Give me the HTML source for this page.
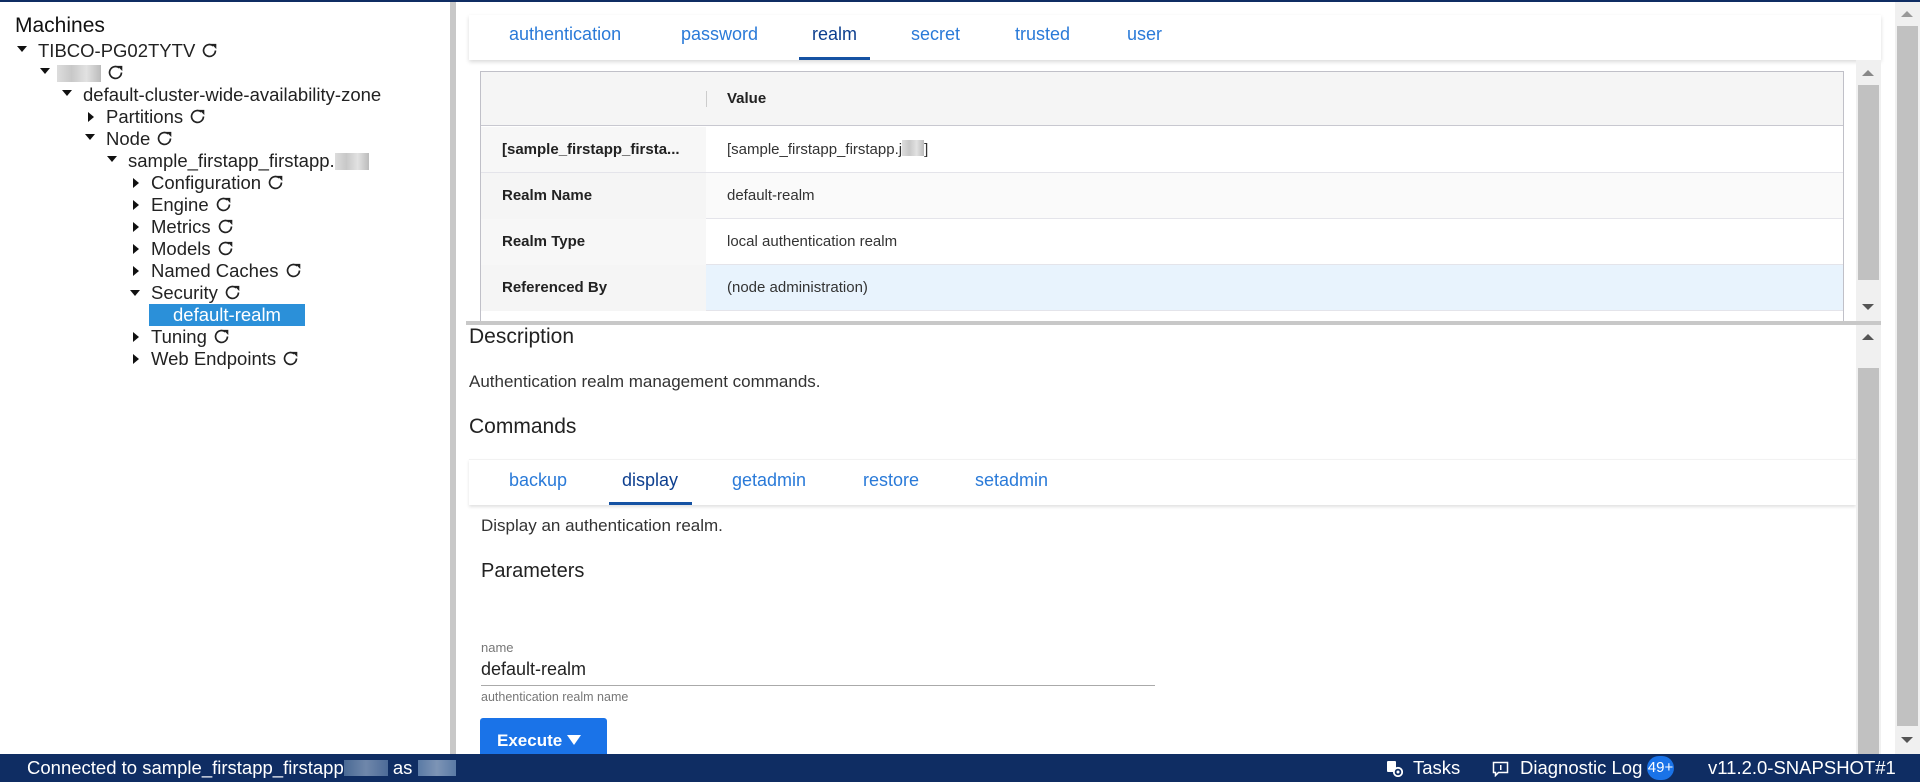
<!DOCTYPE html>
<html><head><meta charset="utf-8"><style>
*{box-sizing:border-box;margin:0;padding:0}
body{width:1920px;height:782px;overflow:hidden;background:#fff;font-family:"Liberation Sans",sans-serif;position:relative;color:#222}
.abs{position:absolute}
.topline{left:0;top:0;width:1920px;height:2px;background:#0f2d63}
.tree div{position:absolute;font-size:18.5px;line-height:22px;white-space:nowrap;color:#222}
.tri{position:absolute;width:0;height:0}
.down{border-left:5px solid transparent;border-right:5px solid transparent;border-top:6px solid #111}
.right{border-top:5px solid transparent;border-bottom:5px solid transparent;border-left:6px solid #111}
.rf{display:inline-block;vertical-align:-2px;margin-left:6px}
.blur{display:inline-block;background:linear-gradient(90deg,#ddd,#c8c8c8,#e2e2e2,#bbb);vertical-align:-3px}
.tabs{position:absolute;background:#fff}
.tabs span{position:absolute;color:#2a7ad8;font-size:18px}
.tabs span.act{color:#0d3f8f}
.cell{position:absolute;font-size:15px;line-height:46px;white-space:nowrap}
.lbl{font-weight:bold;color:#222}
.sb{position:absolute;background:#f0f0f0}
.thumb{position:absolute;background:#c1c1c1}
.up,.dn{position:absolute;width:0;height:0;border-left:6px solid transparent;border-right:6px solid transparent}
.up{border-bottom:6px solid #888}.dn{border-top:6px solid #555}
.status{left:0;top:754px;width:1920px;height:28px;background:#0f2d63;color:#fff;font-size:18.5px;line-height:28px}
</style></head><body>
<svg width="0" height="0" style="position:absolute"><defs><symbol id="rf" viewBox="0 0 16 16"><path d="M13.6 8A5.6 5.6 0 1 1 11.5 3.6" fill="none" stroke="#222" stroke-width="1.6"/><path d="M9.6 1.8h4.8v4.8z" fill="#222"/></symbol></defs></svg>
<div class="abs topline"></div>
<div class="abs" style="left:450px;top:2px;width:6px;height:752px;background:#c8c8c8"></div>
<div class="abs" style="left:15px;top:14px;font-size:21px;color:#111">Machines</div>
<div class="tree">
<div style="left:17px;top:46px" class="tri down"></div><div style="left:38px;top:40px">TIBCO-PG02TYTV<svg class="rf" width="17" height="17"><use href="#rf"/></svg></div>
<div style="left:40px;top:68px" class="tri down"></div><div style="left:57px;top:62px"><span class="blur" style="width:44px;height:17px"></span><svg class="rf" width="17" height="17"><use href="#rf"/></svg></div>
<div style="left:62px;top:90px" class="tri down"></div><div style="left:83px;top:84px">default-cluster-wide-availability-zone</div>
<div style="left:88px;top:112px" class="tri right"></div><div style="left:106px;top:106px">Partitions<svg class="rf" width="17" height="17"><use href="#rf"/></svg></div>
<div style="left:85px;top:134px" class="tri down"></div><div style="left:106px;top:128px">Node<svg class="rf" width="17" height="17"><use href="#rf"/></svg></div>
<div style="left:107px;top:156px" class="tri down"></div><div style="left:128px;top:150px">sample_firstapp_firstapp.<span class="blur" style="width:34px;height:17px"></span></div>
<div style="left:133px;top:178px" class="tri right"></div><div style="left:151px;top:172px">Configuration<svg class="rf" width="17" height="17"><use href="#rf"/></svg></div>
<div style="left:133px;top:200px" class="tri right"></div><div style="left:151px;top:194px">Engine<svg class="rf" width="17" height="17"><use href="#rf"/></svg></div>
<div style="left:133px;top:222px" class="tri right"></div><div style="left:151px;top:216px">Metrics<svg class="rf" width="17" height="17"><use href="#rf"/></svg></div>
<div style="left:133px;top:244px" class="tri right"></div><div style="left:151px;top:238px">Models<svg class="rf" width="17" height="17"><use href="#rf"/></svg></div>
<div style="left:133px;top:266px" class="tri right"></div><div style="left:151px;top:260px">Named Caches<svg class="rf" width="17" height="17"><use href="#rf"/></svg></div>
<div style="left:130px;top:290px" class="tri down"></div><div style="left:151px;top:282px">Security<svg class="rf" width="17" height="17"><use href="#rf"/></svg></div>
<div style="left:149px;top:304px;width:156px;height:22px;background:#2b90d9"></div><div style="left:173px;top:304px;color:#fff">default-realm</div>
<div style="left:133px;top:332px" class="tri right"></div><div style="left:151px;top:326px">Tuning<svg class="rf" width="17" height="17"><use href="#rf"/></svg></div>
<div style="left:133px;top:354px" class="tri right"></div><div style="left:151px;top:348px">Web Endpoints<svg class="rf" width="17" height="17"><use href="#rf"/></svg></div>
</div>

<div class="tabs" style="left:469px;top:15px;width:1412px;height:45px;box-shadow:0 2px 4px rgba(0,0,0,.15)">
<span style="left:40px;top:9px">authentication</span>
<span style="left:212px;top:9px">password</span>
<span class="act" style="left:343px;top:9px">realm</span>
<span style="left:442px;top:9px">secret</span>
<span style="left:546px;top:9px">trusted</span>
<span style="left:658px;top:9px">user</span>
<div class="abs" style="left:330px;top:42px;width:71px;height:3px;background:#1552a3"></div>
</div>

<div class="abs" style="left:480px;top:71px;width:1364px;height:254px;border:1px solid #c0c0c8;border-bottom:none;background:#fff;overflow:hidden">
<div class="abs" style="left:0;top:0;width:1364px;height:54px;background:#f5f5f5;border-bottom:1px solid #c8c8d0"></div>
<div class="abs" style="left:225px;top:19px;width:1px;height:16px;background:#ccc"></div>
<div class="cell lbl" style="left:246px;top:4px">Value</div>
<div class="abs" style="left:0;top:55px;width:225px;height:46px;background:#f7f7f7;border-bottom:1px solid #e4e4ea"></div>
<div class="abs" style="left:225px;top:55px;width:1140px;height:46px;background:#fff;border-bottom:1px solid #e4e4ea"></div>
<div class="cell lbl" style="left:21px;top:55px">[sample_firstapp_firsta...</div>
<div class="cell" style="left:246px;top:55px;color:#333">[sample_firstapp_firstapp.j<span class="blur" style="width:22px;height:16px;vertical-align:-2px"></span>]</div>
<div class="abs" style="left:0;top:101px;width:1364px;height:46px;background:#fafafa;border-bottom:1px solid #e4e4ea"></div>
<div class="abs" style="left:0;top:101px;width:225px;height:46px;background:#f5f5f5"></div>
<div class="cell lbl" style="left:21px;top:101px">Realm Name</div>
<div class="cell" style="left:246px;top:101px;color:#333">default-realm</div>
<div class="abs" style="left:0;top:147px;width:1364px;height:46px;background:#fff;border-bottom:1px solid #e4e4ea"></div>
<div class="abs" style="left:0;top:147px;width:225px;height:46px;background:#f7f7f7"></div>
<div class="cell lbl" style="left:21px;top:147px">Realm Type</div>
<div class="cell" style="left:246px;top:147px;color:#333">local authentication realm</div>
<div class="abs" style="left:0;top:193px;width:1364px;height:46px;background:#e8f3fd;border-bottom:1px solid #e4e4ea"></div>
<div class="abs" style="left:0;top:193px;width:225px;height:46px;background:#f5f5f5"></div>
<div class="cell lbl" style="left:21px;top:193px">Referenced By</div>
<div class="cell" style="left:246px;top:193px;color:#333">(node administration)</div>
</div>
<div class="sb" style="left:1856px;top:60px;width:25px;height:261px"></div>
<div class="thumb" style="left:1858px;top:85px;width:21px;height:195px"></div>
<div class="up" style="left:1862px;top:70px"></div>
<div class="dn" style="left:1862px;top:304px"></div>
<div class="abs" style="left:466px;top:321px;width:1415px;height:4px;background:#c8c8c8"></div>

<div class="abs" style="left:469px;top:325px;font-size:21px;color:#222">Description</div>
<div class="abs" style="left:469px;top:372px;font-size:17px;color:#333">Authentication realm management commands.</div>
<div class="abs" style="left:469px;top:415px;font-size:21px;color:#222">Commands</div>
<div class="tabs" style="left:469px;top:459px;width:1387px;height:46px;box-shadow:0 2px 3px rgba(0,0,0,.12);border-top:1px solid #f2f2f2">
<span style="left:40px;top:10px">backup</span>
<span class="act" style="left:153px;top:10px">display</span>
<span style="left:263px;top:10px">getadmin</span>
<span style="left:394px;top:10px">restore</span>
<span style="left:506px;top:10px">setadmin</span>
<div class="abs" style="left:140px;top:42px;width:83px;height:3px;background:#1552a3"></div>
</div>
<div class="abs" style="left:481px;top:516px;font-size:17px;color:#333">Display an authentication realm.</div>
<div class="abs" style="left:481px;top:560px;font-size:20px;color:#222">Parameters</div>
<div class="abs" style="left:481px;top:640px;font-size:13px;color:#777">name</div>
<div class="abs" style="left:481px;top:659px;font-size:18px;color:#222">default-realm</div>
<div class="abs" style="left:481px;top:685px;width:674px;height:1px;background:#aaa"></div>
<div class="abs" style="left:481px;top:690px;font-size:12.5px;color:#777">authentication realm name</div>
<div class="abs" style="left:480px;top:718px;width:127px;height:40px;background:#1a73e8;border-radius:3px;color:#fff;font-weight:bold;font-size:17px;padding:13px 0 0 17px">Execute <span style="display:inline-block;width:0;height:0;border-left:7px solid transparent;border-right:7px solid transparent;border-top:10px solid #fff;vertical-align:1px"></span></div>
<div class="sb" style="left:1856px;top:325px;width:25px;height:429px"></div>
<div class="thumb" style="left:1858px;top:368px;width:21px;height:386px"></div>
<div class="up" style="left:1862px;top:334px;border-bottom-color:#555"></div>

<div class="sb" style="left:1895px;top:2px;width:25px;height:752px"></div>
<div class="thumb" style="left:1897px;top:26px;width:21px;height:700px"></div>
<div class="up" style="left:1901px;top:11px;border-bottom-color:#999"></div>
<div class="dn" style="left:1901px;top:737px;border-top-color:#555"></div>

<div class="abs status">
<span class="abs" style="left:27px">Connected to sample_firstapp_firstapp<span class="blur" style="width:44px;height:16px;background:linear-gradient(90deg,#4a6a95,#6f87aa,#4d6b98);vertical-align:-2px"></span> as <span class="blur" style="width:38px;height:16px;background:linear-gradient(90deg,#5a7aa5,#7d94b5,#5a7aa5);vertical-align:-2px"></span></span>
<svg class="abs" style="left:1386px;top:6px" width="17" height="17" viewBox="0 0 17 17"><rect x="1" y="1" width="9" height="11" rx="1" fill="#fff"/><circle cx="12" cy="12" r="4.2" fill="#0f2d63" stroke="#fff" stroke-width="1.8"/><circle cx="12" cy="12" r="1.5" fill="#fff"/></svg>
<span class="abs" style="left:1413px">Tasks</span>
<svg class="abs" style="left:1492px;top:7px" width="17" height="16" viewBox="0 0 17 16"><path d="M1.5 1.5h14v10h-9l-3 3v-3h-2z" fill="none" stroke="#fff" stroke-width="1.5"/><rect x="8" y="4" width="1.5" height="5" fill="#fff"/></svg>
<span class="abs" style="left:1520px">Diagnostic Log</span>
<span class="abs" style="left:1647px;top:2px;width:27px;height:24px;border-radius:12px;background:#1a73e8;font-size:15px;line-height:24px;text-align:center">49+</span>
<span class="abs" style="left:1708px">v11.2.0-SNAPSHOT#1</span>
</div>
</body></html>
